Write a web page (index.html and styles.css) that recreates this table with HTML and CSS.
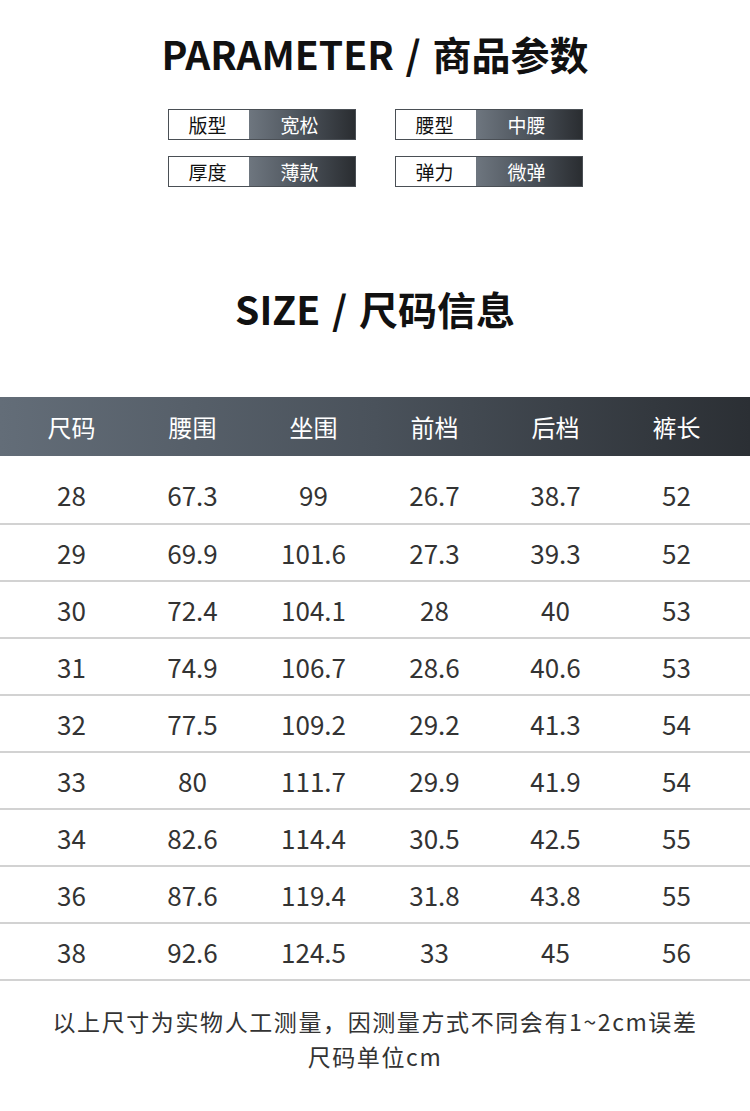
FILE: index.html
```html
<!DOCTYPE html>
<html lang="zh">
<head>
<meta charset="utf-8">
<title>PARAMETER / 商品参数</title>
<link rel="stylesheet" href="styles.css">
</head>
<body>
<div class="page">
  <h1 class="title title-param">PARAMETER / 商品参数</h1>
  <div class="params">
    <div class="param"><span class="param-label">版型</span><span class="param-value">宽松</span></div>
    <div class="param"><span class="param-label">腰型</span><span class="param-value">中腰</span></div>
    <div class="param"><span class="param-label">厚度</span><span class="param-value">薄款</span></div>
    <div class="param"><span class="param-label">弹力</span><span class="param-value">微弹</span></div>
  </div>

  <h1 class="title title-size">SIZE / 尺码信息</h1>

  <div class="size-table">
    <div class="row head"><span>尺码</span><span>腰围</span><span>坐围</span><span>前档</span><span>后档</span><span>裤长</span></div>
    <div class="row first"><span>28</span><span>67.3</span><span>99</span><span>26.7</span><span>38.7</span><span>52</span></div>
    <div class="row"><span>29</span><span>69.9</span><span>101.6</span><span>27.3</span><span>39.3</span><span>52</span></div>
    <div class="row"><span>30</span><span>72.4</span><span>104.1</span><span>28</span><span>40</span><span>53</span></div>
    <div class="row"><span>31</span><span>74.9</span><span>106.7</span><span>28.6</span><span>40.6</span><span>53</span></div>
    <div class="row"><span>32</span><span>77.5</span><span>109.2</span><span>29.2</span><span>41.3</span><span>54</span></div>
    <div class="row"><span>33</span><span>80</span><span>111.7</span><span>29.9</span><span>41.9</span><span>54</span></div>
    <div class="row"><span>34</span><span>82.6</span><span>114.4</span><span>30.5</span><span>42.5</span><span>55</span></div>
    <div class="row"><span>36</span><span>87.6</span><span>119.4</span><span>31.8</span><span>43.8</span><span>55</span></div>
    <div class="row"><span>38</span><span>92.6</span><span>124.5</span><span>33</span><span>45</span><span>56</span></div>
  </div>

  <div class="note">
    <p>以上尺寸为实物人工测量，因测量方式不同会有1~2cm误差</p>
    <p>尺码单位cm</p>
  </div>
</div>
</body>
</html>
```

FILE: styles.css
```css
* { box-sizing: border-box; }
html, body {
  margin: 0;
  padding: 0;
  background: #ffffff;
}
body {
  font-family: "Noto Sans CJK SC", "Noto Sans", sans-serif;
  color: #333333;
}
.page {
  width: 750px;
  display: flex;
  flex-direction: column;
  align-items: center;
}
.title {
  margin: 0;
  font-size: 39px;
  line-height: 50px;
  font-weight: 700;
  color: #111111;
  text-align: center;
  word-spacing: 3px;
}
.title-param { margin-top: 28px; }
.title-size { margin-top: 96px; }

.params {
  margin-top: 31px;
  display: grid;
  grid-template-columns: 188px 188px;
  column-gap: 39px;
  row-gap: 16px;
}
.param {
  display: flex;
  height: 31px;
  border: 1px solid #4a4f55;
  font-size: 19px;
  line-height: 29px;
}
.param-label {
  width: 80px;
  background: #ffffff;
  color: #111111;
  text-align: center;
  padding-right: 2px;
}
.param-value {
  flex: 1;
  background: linear-gradient(to right, #6e767f 0%, #4c535b 50%, #2a2d31 100%);
  color: #ffffff;
  text-align: center;
  padding-right: 4px;
}

.size-table {
  margin-top: 64px;
  width: 750px;
}
.row {
  display: grid;
  grid-template-columns: repeat(6, 121px);
  padding: 0 11px;
  height: 57px;
  border-bottom: 2px solid #d2d2d2;
  align-items: center;
  font-size: 26px;
  color: #333333;
}
.row span { text-align: center; }
.row.head {
  height: 59px;
  border-bottom: 0;
  background: linear-gradient(to right, #636d78 0%, #4a525b 50%, #2b2f34 100%);
  color: #ffffff;
  font-size: 24px;
}
.row.first {
  height: 69px;
  padding-top: 10px;
}

.note {
  margin-top: 23px;
  text-align: center;
  font-size: 23px;
  line-height: 35px;
  letter-spacing: 1.6px;
  color: #333333;
}
.note p { margin: 0; }
```
